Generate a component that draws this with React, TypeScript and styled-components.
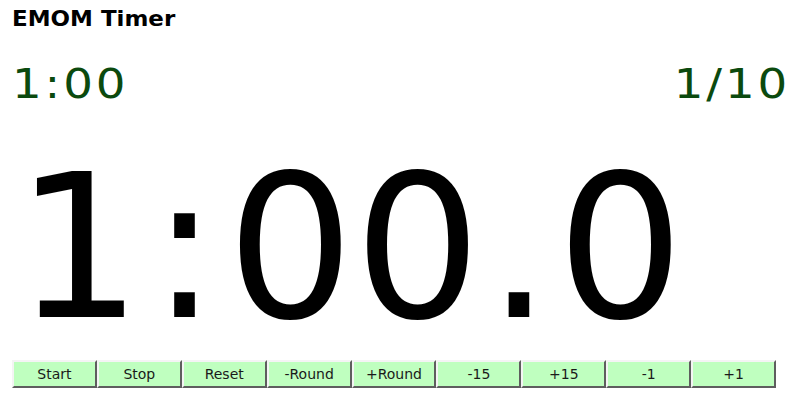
import React from "react";
import styled, { createGlobalStyle } from "styled-components";

const Global = createGlobalStyle`
  html, body { margin: 0; padding: 0; background: #fff; }
  body { font-family: Verdana, "DejaVu Sans", sans-serif; }
`;

const Page = styled.div`
  width: 803px;
  height: 403px;
  box-sizing: border-box;
  padding: 8px 12px 0 12px;
  display: flex;
  flex-direction: column;
  overflow: hidden;
`;

const Title = styled.h1`
  margin: 0;
  font-size: 20.5px;
  font-weight: bold;
  line-height: 23px;
  color: #000;
  transform: scaleX(1.12);
  transform-origin: left center;
  align-self: flex-start;
`;

const InfoRow = styled.div`
  margin-top: 30px;
  display: flex;
  justify-content: space-between;
  font-size: 41px;
  line-height: 47px;
  color: #0b4a0e;
`;

const Stat = styled.span<{ $align: "left" | "right" }>`
  letter-spacing: 2.5px;
  margin-right: ${(p) => (p.$align === "right" ? "1px" : "0")};
  transform: scaleX(1.14);
  transform-origin: ${(p) => p.$align} center;
`;

const Clock = styled.div`
  margin-top: 30px;
  margin-left: 3px;
  font-size: 200px;
  line-height: 220px;
  height: 220px;
  color: #000;
  white-space: nowrap;
`;

const Sep = styled.span<{ $pad: number }>`
  padding: 0 ${(p) => p.$pad}px;
`;

const Controls = styled.div`
  margin-top: 2px;
  width: 764px;
  display: grid;
  grid-template-columns: repeat(9, 1fr);
`;

const Btn = styled.button`
  height: 28px;
  box-sizing: border-box;
  padding: 0;
  margin: 0;
  background: #bfffbf;
  border: 2px solid;
  border-color: #f4f4f4 #5e5e5e #5e5e5e #f4f4f4;
  font-family: Verdana, "DejaVu Sans", sans-serif;
  font-size: 14px;
  color: #1a1a1a;
`;

const labels = ["Start", "Stop", "Reset", "-Round", "+Round", "-15", "+15", "-1", "+1"];

export default function App() {
  return (
    <>
      <Global />
      <Page>
        <Title>EMOM Timer</Title>
        <InfoRow>
          <Stat $align="left">1:00</Stat>
          <Stat $align="right">1/10</Stat>
        </InfoRow>
        <Clock>
          1<Sep $pad={8.5}>:</Sep>00<Sep $pad={6}>.</Sep>0
        </Clock>
        <Controls>
          {labels.map((l) => (
            <Btn key={l}>{l}</Btn>
          ))}
        </Controls>
      </Page>
    </>
  );
}
